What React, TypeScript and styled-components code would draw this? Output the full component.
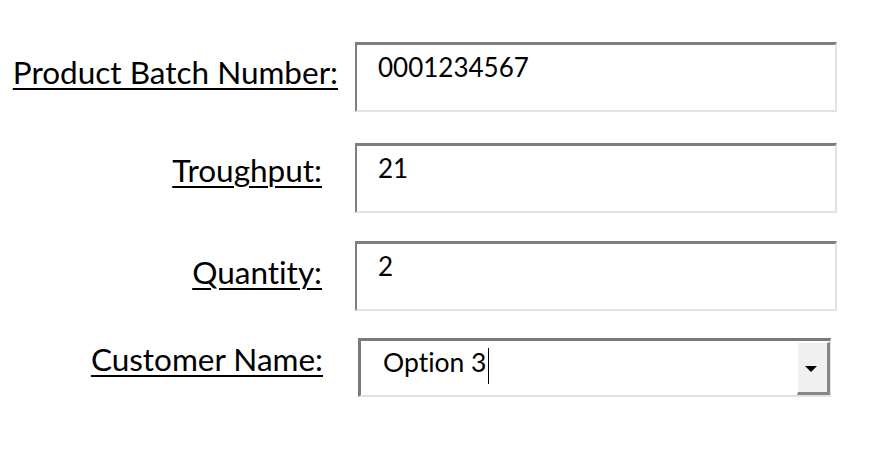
import React from "react";
import styled, { createGlobalStyle } from "styled-components";

const Global = createGlobalStyle`
  html, body { margin: 0; padding: 0; background: #ffffff; }
  body { font-family: Lato, "Open Sans", sans-serif; color: #000; font-variant-ligatures: none; }
`;

const Form = styled.div`
  display: flex;
  flex-direction: column;
  padding-top: 42px;
  width: 880px;
  height: 453px;
  box-sizing: border-box;
`;

const Row = styled.div<{ $space: number }>`
  display: flex;
  align-items: flex-start;
  margin-top: ${(p) => p.$space}px;
`;

const LabelCell = styled.div<{ $top: number; $right: number }>`
  width: 338px;
  box-sizing: border-box;
  padding-right: ${(p) => p.$right}px;
  padding-top: ${(p) => p.$top}px;
  text-align: right;
  white-space: nowrap;
  flex: none;
`;

const Label = styled.span`
  font-family: Lato, sans-serif;
  font-size: 31.5px;
  line-height: 1.2;
  font-variant-ligatures: none;
  text-decoration: underline;
  text-decoration-thickness: 2px;
  text-underline-offset: 4px;
`;

const TextBox = styled.div`
  margin-left: 17px;
  width: 482px;
  height: 70px;
  box-sizing: border-box;
  border-top: 3px solid #7f7f7f;
  border-left: 2px solid #7f7f7f;
  border-right: 2px solid #e3e3e3;
  border-bottom: 2px solid #e3e3e3;
  padding: 7px 0 0 21px;
  font-family: Lato, sans-serif;
  font-size: 26px;
  line-height: 1.2;
  white-space: nowrap;
`;

const Select = styled.div`
  margin-left: 20px;
  width: 473px;
  height: 59px;
  box-sizing: border-box;
  border-top: 3px solid #7a7a7a;
  border-left: 3px solid #7a7a7a;
  border-right: 1px solid #e3e3e3;
  border-bottom: 2px solid #e3e3e3;
  display: flex;
  align-items: stretch;
`;

const SelectValue = styled.div`
  flex: 1;
  display: flex;
  align-items: flex-start;
  padding: 6px 0 0 22px;
  font-family: Lato, sans-serif;
  font-size: 26.5px;
  line-height: 1.2;
  white-space: nowrap;
  font-variant-ligatures: none;
`;

const Caret = styled.span`
  display: inline-block;
  width: 1px;
  height: 36px;
  margin-top: 1px;
  margin-left: 2px;
  background: #000;
`;

const DropButton = styled.div`
  width: 33px;
  margin-top: 1px;
  box-sizing: border-box;
  background: #f0f0f0;
  border-top: 1px solid #ffffff;
  border-left: 1px solid #ffffff;
  border-right: 3px solid #878787;
  border-bottom: 3px solid #878787;
  display: flex;
  align-items: center;
  justify-content: center;
  padding-right: 3px;
`;

const Arrow = styled.div`
  width: 0;
  height: 0;
  border-left: 6px solid transparent;
  border-right: 6px solid transparent;
  border-top: 6px solid #000;
  margin-top: 2px;
`;

export default function App() {
  return (
    <>
      <Global />
      <Form>
        <Row $space={0}>
          <LabelCell $top={11.5} $right={0}>
            <Label>Product Batch Number:</Label>
          </LabelCell>
          <TextBox>0001234567</TextBox>
        </Row>
        <Row $space={31}>
          <LabelCell $top={9} $right={16}>
            <Label>Troughput:</Label>
          </LabelCell>
          <TextBox>21</TextBox>
        </Row>
        <Row $space={28}>
          <LabelCell $top={12.5} $right={16}>
            <Label>Quantity:</Label>
          </LabelCell>
          <TextBox>2</TextBox>
        </Row>
        <Row $space={27}>
          <LabelCell $top={2.5} $right={15}>
            <Label>Customer Name:</Label>
          </LabelCell>
          <Select>
            <SelectValue>
              Option 3<Caret />
            </SelectValue>
            <DropButton>
              <Arrow />
            </DropButton>
          </Select>
        </Row>
      </Form>
    </>
  );
}
